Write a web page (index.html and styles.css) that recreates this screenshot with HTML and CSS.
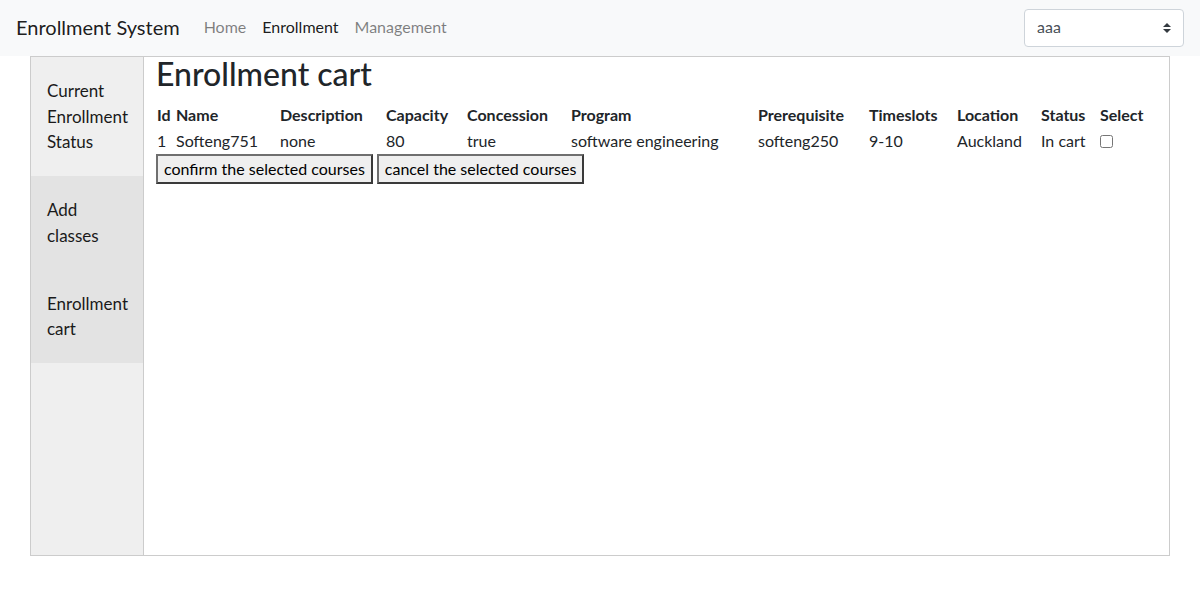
FILE: index.html
```html
<!DOCTYPE html>
<html lang="en">
<head>
<meta charset="utf-8">
<title>Enrollment System</title>
<link rel="stylesheet" href="styles.css">
</head>
<body>
<nav class="navbar">
  <a class="brand" href="#">Enrollment System</a>
  <ul class="nav">
    <li><a class="nav-link" href="#">Home</a></li>
    <li><a class="nav-link active" href="#">Enrollment</a></li>
    <li><a class="nav-link" href="#">Management</a></li>
  </ul>
  <div class="select-wrap">
    <select class="user-select"><option>aaa</option></select>
    <svg class="select-arrow" width="8" height="10" viewBox="0 0 4 5"><path fill="#343a40" d="M2 0L0 2h4zm0 5L0 3h4z"/></svg>
  </div>
</nav>
<div class="container">
  <aside class="sidebar">
    <div class="side-item">Current Enrollment Status</div>
    <div class="side-item dark">Add classes</div>
    <div class="side-item dark">Enrollment cart</div>
  </aside>
  <main class="main">
    <h2 class="title">Enrollment cart</h2>
    <table class="cart">
      <thead>
        <tr>
          <th class="c-id">Id</th>
          <th class="c-name">Name</th>
          <th class="c-desc">Description</th>
          <th class="c-cap">Capacity</th>
          <th class="c-conc">Concession</th>
          <th class="c-prog">Program</th>
          <th class="c-pre">Prerequisite</th>
          <th class="c-time">Timeslots</th>
          <th class="c-loc">Location</th>
          <th class="c-stat">Status</th>
          <th class="c-sel">Select</th>
        </tr>
      </thead>
      <tbody>
        <tr>
          <td>1</td>
          <td>Softeng751</td>
          <td>none</td>
          <td>80</td>
          <td>true</td>
          <td>software engineering</td>
          <td>softeng250</td>
          <td>9-10</td>
          <td>Auckland</td>
          <td>In cart</td>
          <td><input type="checkbox" class="check"></td>
        </tr>
      </tbody>
    </table>
    <div class="actions">
      <button class="btn">confirm the selected courses</button>
      <button class="btn">cancel the selected courses</button>
    </div>
  </main>
</div>
</body>
</html>
```
FILE: styles.css
```css
* { box-sizing: border-box; }
body {
  margin: 0;
  font-family: Lato, "Open Sans", "Liberation Sans", sans-serif;
  font-size: 16px;
  line-height: 1.5;
  color: #212529;
  background: #fff;
}
.navbar {
  display: flex;
  align-items: center;
  height: 56px;
  padding: 0 16px;
  background: #f8f9fa;
}
.brand {
  font-size: 20px;
  line-height: 30px;
  color: rgba(0,0,0,.9);
  text-decoration: none;
  margin-right: 16px;
  margin-bottom: 2px;
}
.nav {
  display: flex;
  list-style: none;
  margin: 0 0 2px;
  padding: 0;
}
.nav-link {
  display: block;
  padding: 8px;
  color: rgba(0,0,0,.5);
  text-decoration: none;
}
.nav-link.active { color: rgba(0,0,0,.9); }
.select-wrap {
  position: relative;
  margin-left: auto;
  width: 160px;
  height: 38px;
}
.user-select {
  appearance: none;
  -webkit-appearance: none;
  width: 100%;
  height: 38px;
  padding: 5px 28px 7px 12px;
  font-family: inherit;
  font-size: 16px;
  line-height: 24px;
  color: #495057;
  background: #fff;
  border: 1px solid #ced4da;
  border-radius: 4px;
}
.select-arrow {
  position: absolute;
  right: 13px;
  top: 14px;
  pointer-events: none;
}
.container {
  display: flex;
  width: 1140px;
  height: 500px;
  margin: 0 auto;
  border: 1px solid #cccccc;
}
.sidebar {
  width: 113px;
  flex: none;
  background: #efefef;
  border-right: 1px solid #cccccc;
}
.side-item {
  padding: 21.25px 16px;
  font-size: 17px;
  line-height: 25.5px;
  color: #1a1a1a;
}
.side-item.dark { background: #e3e3e3; }
.main {
  flex: 1;
  padding: 0 12px;
}
.title {
  margin: 0 0 12px;
  font-size: 32px;
  font-weight: 500;
  line-height: 33px;
}
.cart {
  border-collapse: collapse;
  table-layout: fixed;
  margin-left: 1px;
}
.cart th, .cart td {
  padding: 1px 0;
  text-align: left;
  vertical-align: top;
  line-height: 24px;
  white-space: nowrap;
}
.cart th { font-weight: 700; }
.c-id { width: 19px; }
.c-name { width: 104px; }
.c-desc { width: 106px; }
.c-cap { width: 81px; }
.c-conc { width: 104px; }
.c-prog { width: 187px; }
.c-pre { width: 111px; }
.c-time { width: 88px; }
.c-loc { width: 84px; }
.c-stat { width: 59px; }
.c-sel { width: 57px; }
.check {
  margin: 6px 0 0;
  width: 13px;
  height: 13px;
}
.actions {
  display: flex;
  gap: 4px;
  margin-top: -1px;
}
.btn {
  font-family: inherit;
  font-size: 16px;
  line-height: 24px;
  padding: 1px 6px;
  color: #000;
  background: #efefef;
  border-width: 2px;
  border-style: solid;
  border-color: #6f6f6f #3a3a3a #3a3a3a #6f6f6f;
  border-radius: 0;
}
```
